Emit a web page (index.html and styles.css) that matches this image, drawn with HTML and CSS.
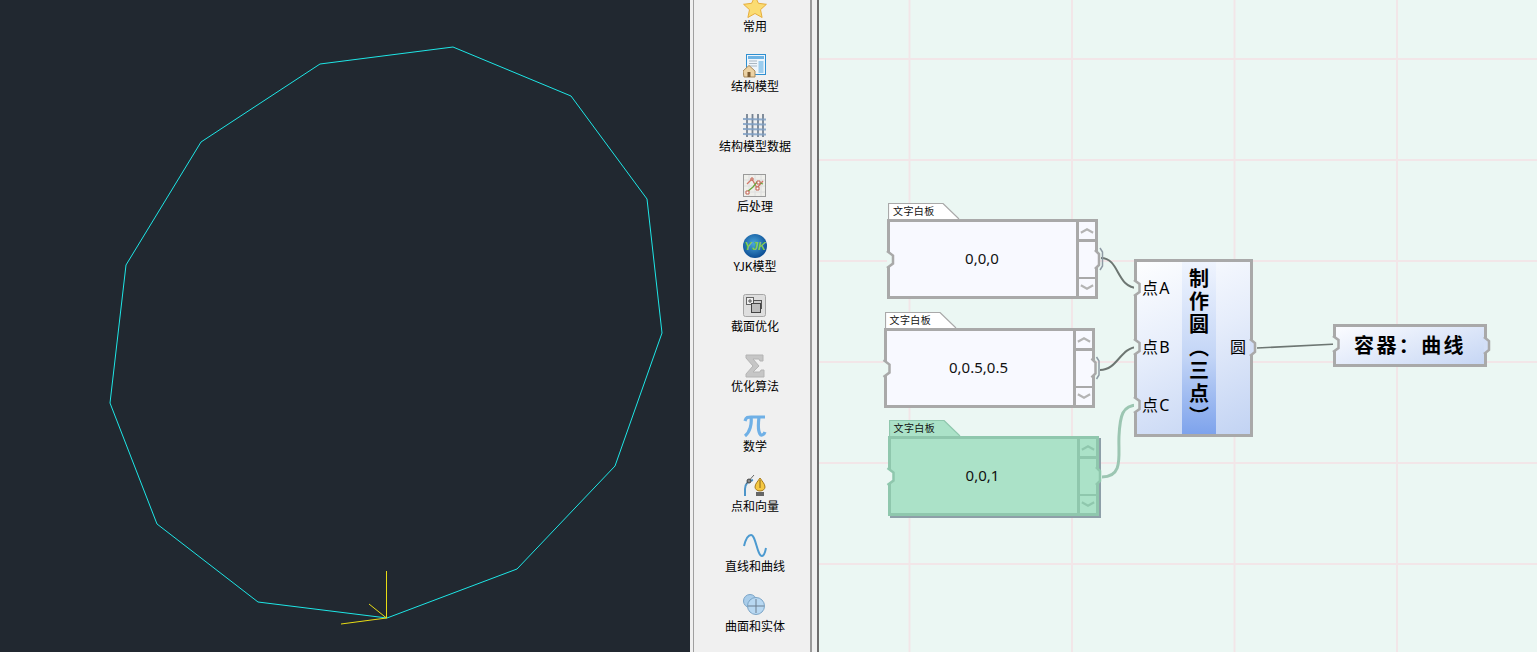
FILE: index.html
```html
<!DOCTYPE html>
<html lang="zh">
<head>
<meta charset="utf-8">
<title>制作圆（三点）</title>
<link rel="stylesheet" href="styles.css">
</head>
<body>
<div class="app">
  <section class="viewport">
    <svg class="scene" viewBox="0 0 690 652" aria-hidden="true">
      <polygon class="circle" points="453,47 571,96 647,199 662,333 615,466 517,569 387,618 258,602 157,524 110,403 126,265 201,142 320,64"/>
      <path class="axis" d="M386.5 618V571M386.500 618L369 604M386.500 618L341 624"/>
    </svg>
  </section>

  <aside class="side">
    <nav class="rail">
      <div class="item">
        <svg class="ico" viewBox="0 0 24 24"><path d="M12 2l3.400 7.300 8 1-5.900 5.400 1.600 7.800-7.100-4-7.100 4 1.600-7.800L.6 10.300l8-1z" fill="#fbdc72" stroke="#e6ad3c"/></svg>
        <span class="lbl">常用</span>
      </div>
      <div class="item">
        <svg class="ico" viewBox="0 0 24 24"><rect x="3.500" y="0.500" width="19" height="20" fill="#eef5fb" stroke="#2f8fd0"/><rect x="5" y="2" width="16" height="3" fill="#6db3e4"/><path d="M6 7h8M6 9.500h8M6 12h8" stroke="#a9b6c2"/><rect x="15.500" y="7" width="5" height="12" fill="#9ccdee"/><path d="M0 17L6 11.500l6 5.500v6H1z" fill="#ecd2a4" stroke="#a98a5a"/><rect x="4.500" y="18" width="3" height="5" fill="#7a5a30"/></svg>
        <span class="lbl">结构模型</span>
      </div>
      <div class="item">
        <svg class="ico" viewBox="0 0 24 24"><path d="M4 0v23M9.500 0v23M15 0v23M20 0v23" stroke="#5f6f82" stroke-width="1.800" opacity=".85"/><path d="M0 5l23 .5M0 10l23 .5M0 15l23 .5M0 20l23 .5" stroke="#7f9fc4" stroke-width="2" opacity=".85"/></svg>
        <span class="lbl">结构模型数据</span>
      </div>
      <div class="item">
        <svg class="ico" viewBox="0 0 24 24"><rect x="0.500" y="0.500" width="22" height="22" fill="#efefeb" stroke="#9a9a9a"/><path d="M6 1v21M12 1v21M18 1v21M1 6h21M1 12h21M1 18h21" stroke="#dedede"/><path d="M4 10l5-5 5 9 6-7" fill="none" stroke="#d2786a" stroke-width="1.300"/><path d="M4 18l6-5 4-5 6 2" fill="none" stroke="#6aa83e" stroke-width="1.300"/><path d="M3 17h3v3H3zM8 4h2v2H8zM13 13h3v3h-3zM14 7h3v3h-3z" fill="#fff" stroke="#c0604e"/></svg>
        <span class="lbl">后处理</span>
      </div>
      <div class="item">
        <svg class="ico" viewBox="0 0 24 24"><defs><radialGradient id="g" cx="45%" cy="40%" r="62%"><stop offset="0" stop-color="#49a6dc"/><stop offset="1" stop-color="#0a4a92"/></radialGradient></defs><circle cx="12" cy="12" r="12" fill="url(#g)"/><text class="yjk" x="12" y="16">YJK</text></svg>
        <span class="lbl">YJK模型</span>
      </div>
      <div class="item">
        <svg class="ico" viewBox="0 0 24 24"><rect x="0.500" y="0.500" width="22" height="22" rx="2" fill="#dedede" stroke="#a6a6a6"/><rect x="3.500" y="3.500" width="7" height="7" fill="#eee" stroke="#666"/><path d="M5 7h4M7 5v4" stroke="#555"/><rect x="10.500" y="6.500" width="8" height="8" fill="#ccc" stroke="#555"/><rect x="8.500" y="9.500" width="9" height="9" fill="#bdbdbd" stroke="#444"/></svg>
        <span class="lbl">截面优化</span>
      </div>
      <div class="item">
        <svg class="ico" viewBox="0 0 24 24"><path d="M3 1h17v6h-3l-1-2H10l6 7-6 6h7l1-2h3v7H3v-3l7-8-7-8z" fill="#c6c6c6" stroke="#b4b4b4"/></svg>
        <span class="lbl">优化算法</span>
      </div>
      <div class="item">
        <svg class="ico" viewBox="0 0 24 24"><path d="M2 7C3 3 5 3 8 3h14M8 3C9 10 7 18 2 22M16 3c-1 8-1 14 1 17 1 2 4 1 5-2" fill="none" stroke="#6fb0e6" stroke-width="3.200"/></svg>
        <span class="lbl">数学</span>
      </div>
      <div class="item">
        <svg class="ico" viewBox="0 0 24 24"><path d="M2 22V15C2 10 5 7 10 6" fill="none" stroke="#4d95c9" stroke-width="2"/><path d="M3 10L11 1" stroke="#666"/><circle cx="6" cy="7" r="2" fill="#888" stroke="#444"/><path d="M17 4c2 3 5 6 5 9 0 2-2 4-5 4s-5-2-5-4c0-3 3-6 5-9z" fill="#f5c842" stroke="#a67a1c"/><path d="M17 6v8" stroke="#8a6414"/><rect x="13" y="18" width="8" height="4" fill="#666"/></svg>
        <span class="lbl">点和向量</span>
      </div>
      <div class="item">
        <svg class="ico" viewBox="0 0 24 24"><path d="M1 12C3 4 5 1 8 1c5 0 6 21 11 21 2 0 3-3 4-8" fill="none" stroke="#4c9ad0" stroke-width="2"/></svg>
        <span class="lbl">直线和曲线</span>
      </div>
      <div class="item">
        <svg class="ico" viewBox="0 0 24 24"><circle cx="7" cy="7" r="6.500" fill="#a9cdea" stroke="#7ba4c6"/><circle cx="13" cy="12" r="8.500" fill="#b8d8f2" stroke="#7ba4c6"/><path d="M13 5v14M5 12h16" stroke="#6c7f90"/></svg>
        <span class="lbl">曲面和实体</span>
      </div>
    </nav>
  </aside>

  <main class="canvas">
    <div class="board b1">
      <div class="tab"><svg class="tab-shape" viewBox="0 0 72 16"><path d="M.5 16V.5H55L71 16"/></svg><span class="tab-text">文字白板</span></div>
      <div class="panel">
        <div class="value">0,0,0</div>
        <div class="scroll">
          <div class="cell"><svg class="chev" viewBox="0 0 16 7"><path d="M1 6l7-4 7 4"/></svg></div>
          <div class="cell"></div>
          <div class="cell"><svg class="chev" viewBox="0 0 16 7"><path d="M1 1l7 4 7-4"/></svg></div>
        </div>
      </div>
    </div>

    <div class="board b2">
      <div class="tab"><svg class="tab-shape" viewBox="0 0 72 16"><path d="M.5 16V.5H55L71 16"/></svg><span class="tab-text">文字白板</span></div>
      <div class="panel">
        <div class="value">0,0.5,0.5</div>
        <div class="scroll">
          <div class="cell"><svg class="chev" viewBox="0 0 16 7"><path d="M1 6l7-4 7 4"/></svg></div>
          <div class="cell"></div>
          <div class="cell"><svg class="chev" viewBox="0 0 16 7"><path d="M1 1l7 4 7-4"/></svg></div>
        </div>
      </div>
    </div>

    <div class="board b3 on">
      <div class="tab"><svg class="tab-shape" viewBox="0 0 72 16"><path d="M.5 16V.5H55L71 16"/></svg><span class="tab-text">文字白板</span></div>
      <div class="panel">
        <div class="value">0,0,1</div>
        <div class="scroll">
          <div class="cell"><svg class="chev" viewBox="0 0 16 7"><path d="M1 6l7-4 7 4"/></svg></div>
          <div class="cell"></div>
          <div class="cell"><svg class="chev" viewBox="0 0 16 7"><path d="M1 1l7 4 7-4"/></svg></div>
        </div>
      </div>
    </div>

    <div class="comp">
      <div class="ports"><span>点A</span><span>点B</span><span>点C</span></div>
      <div class="title">制作圆（三点）</div>
      <div class="ports out"><span>圆</span></div>
    </div>

    <div class="holder">容器：曲线</div>

    <svg class="wires" viewBox="819 0 718 652" aria-hidden="true">
      <path class="wire" d="M1101 258C1120 258 1116 288 1138 288"/>
      <path class="wire" d="M1100 370C1118 370 1120 347 1138 347"/>
      <path class="wire green" d="M1102 477C1124 477 1118 455 1119 436C1120 416 1122 405 1138 405"/>
      <path class="wire out" d="M1257 348L1337 344"/>

      <path class="notch" d="M887 251l6 4.500v8l-6 4.500"/>
      <path class="notch" d="M883.500 360l6 4.500v8l-6 4.500"/>
      <path class="notch gn" d="M887.500 468l6 4.500v8l-6 4.500"/>

      <path class="bulge" d="M1095 250l4 4v11l-4 4"/>
      <path class="port-outer" d="M1100 248l2.500 4v14l-2.500 4"/>
      <path class="bulge" d="M1091.500 358.500l4 4v11l-4 4"/>
      <path class="port-outer" d="M1096.500 357l2.500 4v14l-2.500 4"/>
      <path class="bulge gn" d="M1096 467l4 4v10l-4 4"/>

      <path class="notch" d="M1134 280l5.500 4v8l-5.500 4"/>
      <path class="notch" d="M1134 339l5.500 4v8l-5.500 4"/>
      <path class="notch" d="M1134 397l5.500 4v8l-5.500 4"/>
      <path class="bulge blue" d="M1250 339l5 4v9l-5 4"/>
      <path class="notch" d="M1333 336l5.500 4v8l-5.500 4"/>
      <path class="bulge blue" d="M1484 337l5 4v9l-5 4"/>
    </svg>
  </main>
</div>
</body>
</html>
```
FILE: styles.css
```css
* { box-sizing: border-box; }
html, body { margin: 0; height: 100%; overflow: hidden; }
body { font-family: "Noto Sans CJK SC", "Noto Sans", sans-serif; color: #111; }

.app { display: flex; width: 1537px; height: 652px; }

.viewport { width: 690px; flex: none; background: #212830; }
.scene { display: block; width: 690px; height: 652px; }
.circle { fill: none; stroke: #1ee6e6; stroke-width: 1; }
.axis { fill: none; stroke: #e8dc14; stroke-width: 1; }

.side {
  width: 129px; flex: none; display: flex; padding-left: 3px;
  background: #f0f0f0; border-right: 2px solid #6e6e6e; overflow: hidden;
}
.rail {
  width: 119px; height: 652px; padding: 0 0 0 6px; overflow: hidden;
  background: #f0f0f0; border-left: 1px solid #a0a0a0; border-right: 2px solid #9a9a9a;
  display: flex; flex-direction: column; align-items: center;
}
.item {
  flex: none; width: 100%; height: 60px; display: flex; flex-direction: column; align-items: center;
  position: relative; top: -6px;
}
.ico { display: block; width: 24px; height: 24px; flex: none; }
.lbl { font-size: 12px; line-height: 16px; white-space: nowrap; color: #000; }
.yjk { font: italic bold 11px "Liberation Sans", sans-serif; fill: #86cc4e; text-anchor: middle; }

.canvas {
  flex: 1; position: relative; overflow: hidden;
  background-color: #ebf7f3;
  background-image:
    linear-gradient(90deg, #f2e6e8 2px, transparent 2px),
    linear-gradient(180deg, #f2e6e8 2px, transparent 2px);
  background-size: 162.5px 100%, 100% 101px;
  background-position: 89.500px 0, 0 58px;
}

.board { position: absolute; width: 211px; }
.b1 { left: 68px; top: 203px; }
.b2 { left: 64.500px; top: 312px; }
.b3 { left: 68.500px; top: 420px; }

.tab { position: relative; height: 16px; margin-left: 1px; width: 72px; }
.tab-shape { position: absolute; inset: 0; width: 72px; height: 16px; }
.tab-shape path { fill: #fff; stroke: #a9a9a9; stroke-width: 1.200; }
.tab-text {
  position: relative; display: block; padding-left: 5px;
  font-size: 10px; line-height: 16px; letter-spacing: .4px; color: #111;
}

.panel {
  display: flex; height: 80px; background: #f8f9ff; border: 3px solid #a9a9a9;
}
.value {
  flex: 1; display: flex; align-items: center; justify-content: center;
  padding: 0 2px 2px 0;
  font: 15px "Noto Sans", sans-serif; color: #111;
}
.scroll {
  width: 19px; flex: none; display: grid; grid-template-rows: 17px 1fr 17px; gap: 2.500px;
  background: #a9a9a9; border-left: 3px solid #a9a9a9;
}
.cell { background: #f8f9ff; display: flex; align-items: center; justify-content: center; }
.chev { width: 14px; height: 7px; display: block; }
.chev path { fill: none; stroke: #b4b4b4; stroke-width: 2.500; }

.on .tab-shape path { fill: #abe2c8; stroke: #8fc7ad; }
.on .panel { background: #abe2c8; border-color: #8fc7ad; box-shadow: 2px 2px 0 #8d9fa8; }
.on .scroll { background: #8fc7ad; border-color: #8fc7ad; }
.on .cell { background: #abe2c8; }
.on .chev path { stroke: #8fc7ad; }

.comp {
  position: absolute; left: 315px; top: 259px; width: 118.500px; height: 178px;
  display: flex; border: 3px solid #a9a9a9;
  background: linear-gradient(155deg, #fdfeff 0%, #e6edfb 45%, #c2d3f3 100%);
}
.ports {
  width: 45px; flex: none; display: grid; grid-auto-rows: 58.500px; align-content: center;
  padding: 0 0 5px 5px; font-family: "Noto Sans", "Noto Sans CJK SC", sans-serif; font-size: 16px; letter-spacing: 1.200px; color: #000;
}
.ports span { display: flex; align-items: center; }
.ports.out { width: 33px; padding-left: 14px; }
.title {
  width: 34px; flex: none; display: flex; align-items: center; justify-content: center;
  writing-mode: vertical-rl; font-size: 20px; font-weight: 700; letter-spacing: 3px; color: #000;
  background: linear-gradient(180deg, #eff4fe 0%, #c3d5f6 55%, #7ea3ec 100%);
}

.holder {
  position: absolute; left: 514px; top: 324px; width: 154px; height: 43px; padding-bottom: 3px;
  display: flex; align-items: center; justify-content: center;
  border: 3px solid #a9a9a9; font-size: 20px; font-weight: 700; letter-spacing: 2.400px; color: #000;
  background: linear-gradient(160deg, #fbfcff 0%, #c6d6f4 100%);
}

.wires { position: absolute; inset: 0; width: 718px; height: 652px; pointer-events: none; }
.wire { fill: none; stroke: #6d7672; stroke-width: 2; }
.wire.green { stroke: #9cc6b2; stroke-width: 3; }
.wire.out { stroke-width: 1.600; }
.notch { fill: #ebf7f3; stroke: #a9a9a9; stroke-width: 2.500; }
.notch.gn { stroke: #8fc7ad; }
.bulge { fill: #f8f9ff; stroke: #a9a9a9; stroke-width: 2.500; }
.bulge.gn { fill: #abe2c8; stroke: #8fc7ad; }
.bulge.blue { fill: #d3dff7; }
.port-outer { fill: none; stroke: #8e9aa4; stroke-width: 1.500; }
```
